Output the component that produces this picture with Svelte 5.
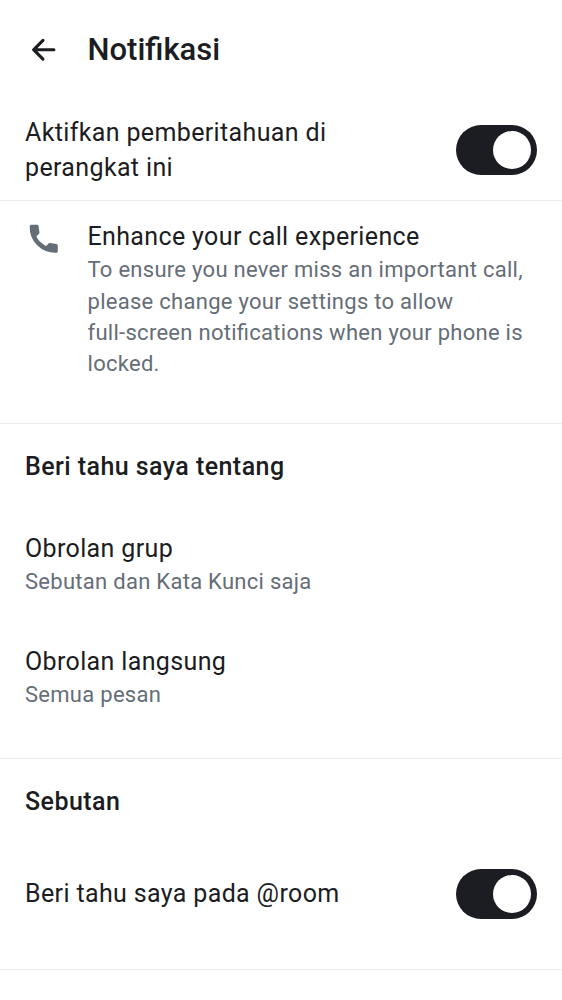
<script>
  let device = $state(true);
  let room = $state(true);
</script>

{#snippet toggle(on, label, flip)}
  <button class="switch" class:off={!on} role="switch" aria-checked={on} aria-label={label} onclick={flip}><span></span></button>
{/snippet}

<main>
  <header>
    <svg class="back" width="37.5" height="37.5" viewBox="0 0 24 24" fill="#1b1d22"><path d="M12.207 5.293a1 1 0 0 1 0 1.414L7.914 11H18.5a1 1 0 1 1 0 2H7.914l4.293 4.293a1 1 0 0 1-1.414 1.414l-6-6a1 1 0 0 1 0-1.414l6-6a1 1 0 0 1 1.414 0" /></svg>
    <h1>Notifikasi</h1>
  </header>

  <section class="device">
    <p class="title">Aktifkan pemberitahuan di<br />perangkat ini</p>
    {@render toggle(device, 'Aktifkan pemberitahuan di perangkat ini', () => (device = !device))}
  </section>

  <section class="call">
    <svg class="phone" width="37.5" height="37.5" viewBox="0 0 24 24" fill="#656d77"><path d="m20.958 16.374.039 3.527q0 .427-.33.756-.33.33-.756.33a16 16 0 0 1-6.57-1.105 16.2 16.2 0 0 1-5.563-3.663 16.1 16.1 0 0 1-3.653-5.573 16.3 16.3 0 0 1-1.115-6.56q0-.427.33-.757T4.095 3l3.528.039a1.07 1.07 0 0 1 1.085.93l.543 3.954q.039.271-.039.504a1.1 1.1 0 0 1-.271.426l-1.64 1.64q.505 1.008 1.154 1.909c.433.6 1.444 1.696 1.444 1.696s1.095 1.01 1.696 1.444q.9.65 1.909 1.153l1.64-1.64q.193-.193.426-.27t.504-.04l3.954.543q.406.059.668.359t.262.727" /></svg>
    <div>
      <p class="title">Enhance your call experience</p>
      <p class="sub">To ensure you never miss an important call,<br />please change your settings to allow<br />full-screen notifications when your phone is<br />locked.</p>
    </div>
  </section>

  <section class="about">
    <h2>Beri tahu saya tentang</h2>
    <div class="item">
      <p class="title">Obrolan grup</p>
      <p class="sub">Sebutan dan Kata Kunci saja</p>
    </div>
    <div class="item">
      <p class="title">Obrolan langsung</p>
      <p class="sub">Semua pesan</p>
    </div>
  </section>

  <section class="mentions">
    <h2>Sebutan</h2>
    <div class="row">
      <p class="title">Beri tahu saya pada @room</p>
      {@render toggle(room, 'Beri tahu saya pada @room', () => (room = !room))}
    </div>
  </section>
</main>

<style>
  :global(body) { background: #fff; }
  main {
    box-sizing: border-box;
    height: 1000px;
    overflow: hidden;
    background: #fff;
    color: #1b1d22;
    font-family: Roboto, sans-serif;
  }
  h1, h2, p { margin: 0; white-space: nowrap; }
  header { display: flex; align-items: center; height: 100px; padding-left: 25px; }
  h1 { margin-left: 25px; font-size: 31px; line-height: 40px; font-weight: 500; }
  h2 { font-size: 25px; line-height: 34px; font-weight: 500; letter-spacing: 0.44px; }
  .title { font-size: 25px; line-height: 34px; letter-spacing: 0.36px; }
  .sub { color: #656d77; font-size: 22px; line-height: 31.25px; letter-spacing: 0.28px; font-feature-settings: 'liga' 1; }
  section { box-sizing: border-box; border-bottom: 1px solid #e9ebee; padding: 0 25px; }
  .device { display: flex; justify-content: space-between; align-items: center; height: 101px; }
  .device .title { line-height: 35px; }
  .call { display: flex; height: 223px; padding-top: 19px; }
  .phone { margin: -0.5px 25px 0 0; flex: none; }
  .call .title { padding-top: 0.4px; }
  .about { height: 335px; padding-top: 26px; }
  .item { height: 66px; margin-top: 48px; }
  .item + .item { margin-top: 47px; }
  .mentions { height: 211px; padding-top: 26px; }
  .row { display: flex; justify-content: space-between; align-items: center; height: 50px; margin-top: 50px; }
  .switch { display: flex; justify-content: flex-end; width: 81px; height: 50px; padding: 6px; border: 0; border-radius: 25px; background: #1b1d22; }
  .switch span { width: 38px; height: 38px; border-radius: 50%; background: #fff; }
  .switch.off { justify-content: flex-start; background: #818a95; }
</style>
